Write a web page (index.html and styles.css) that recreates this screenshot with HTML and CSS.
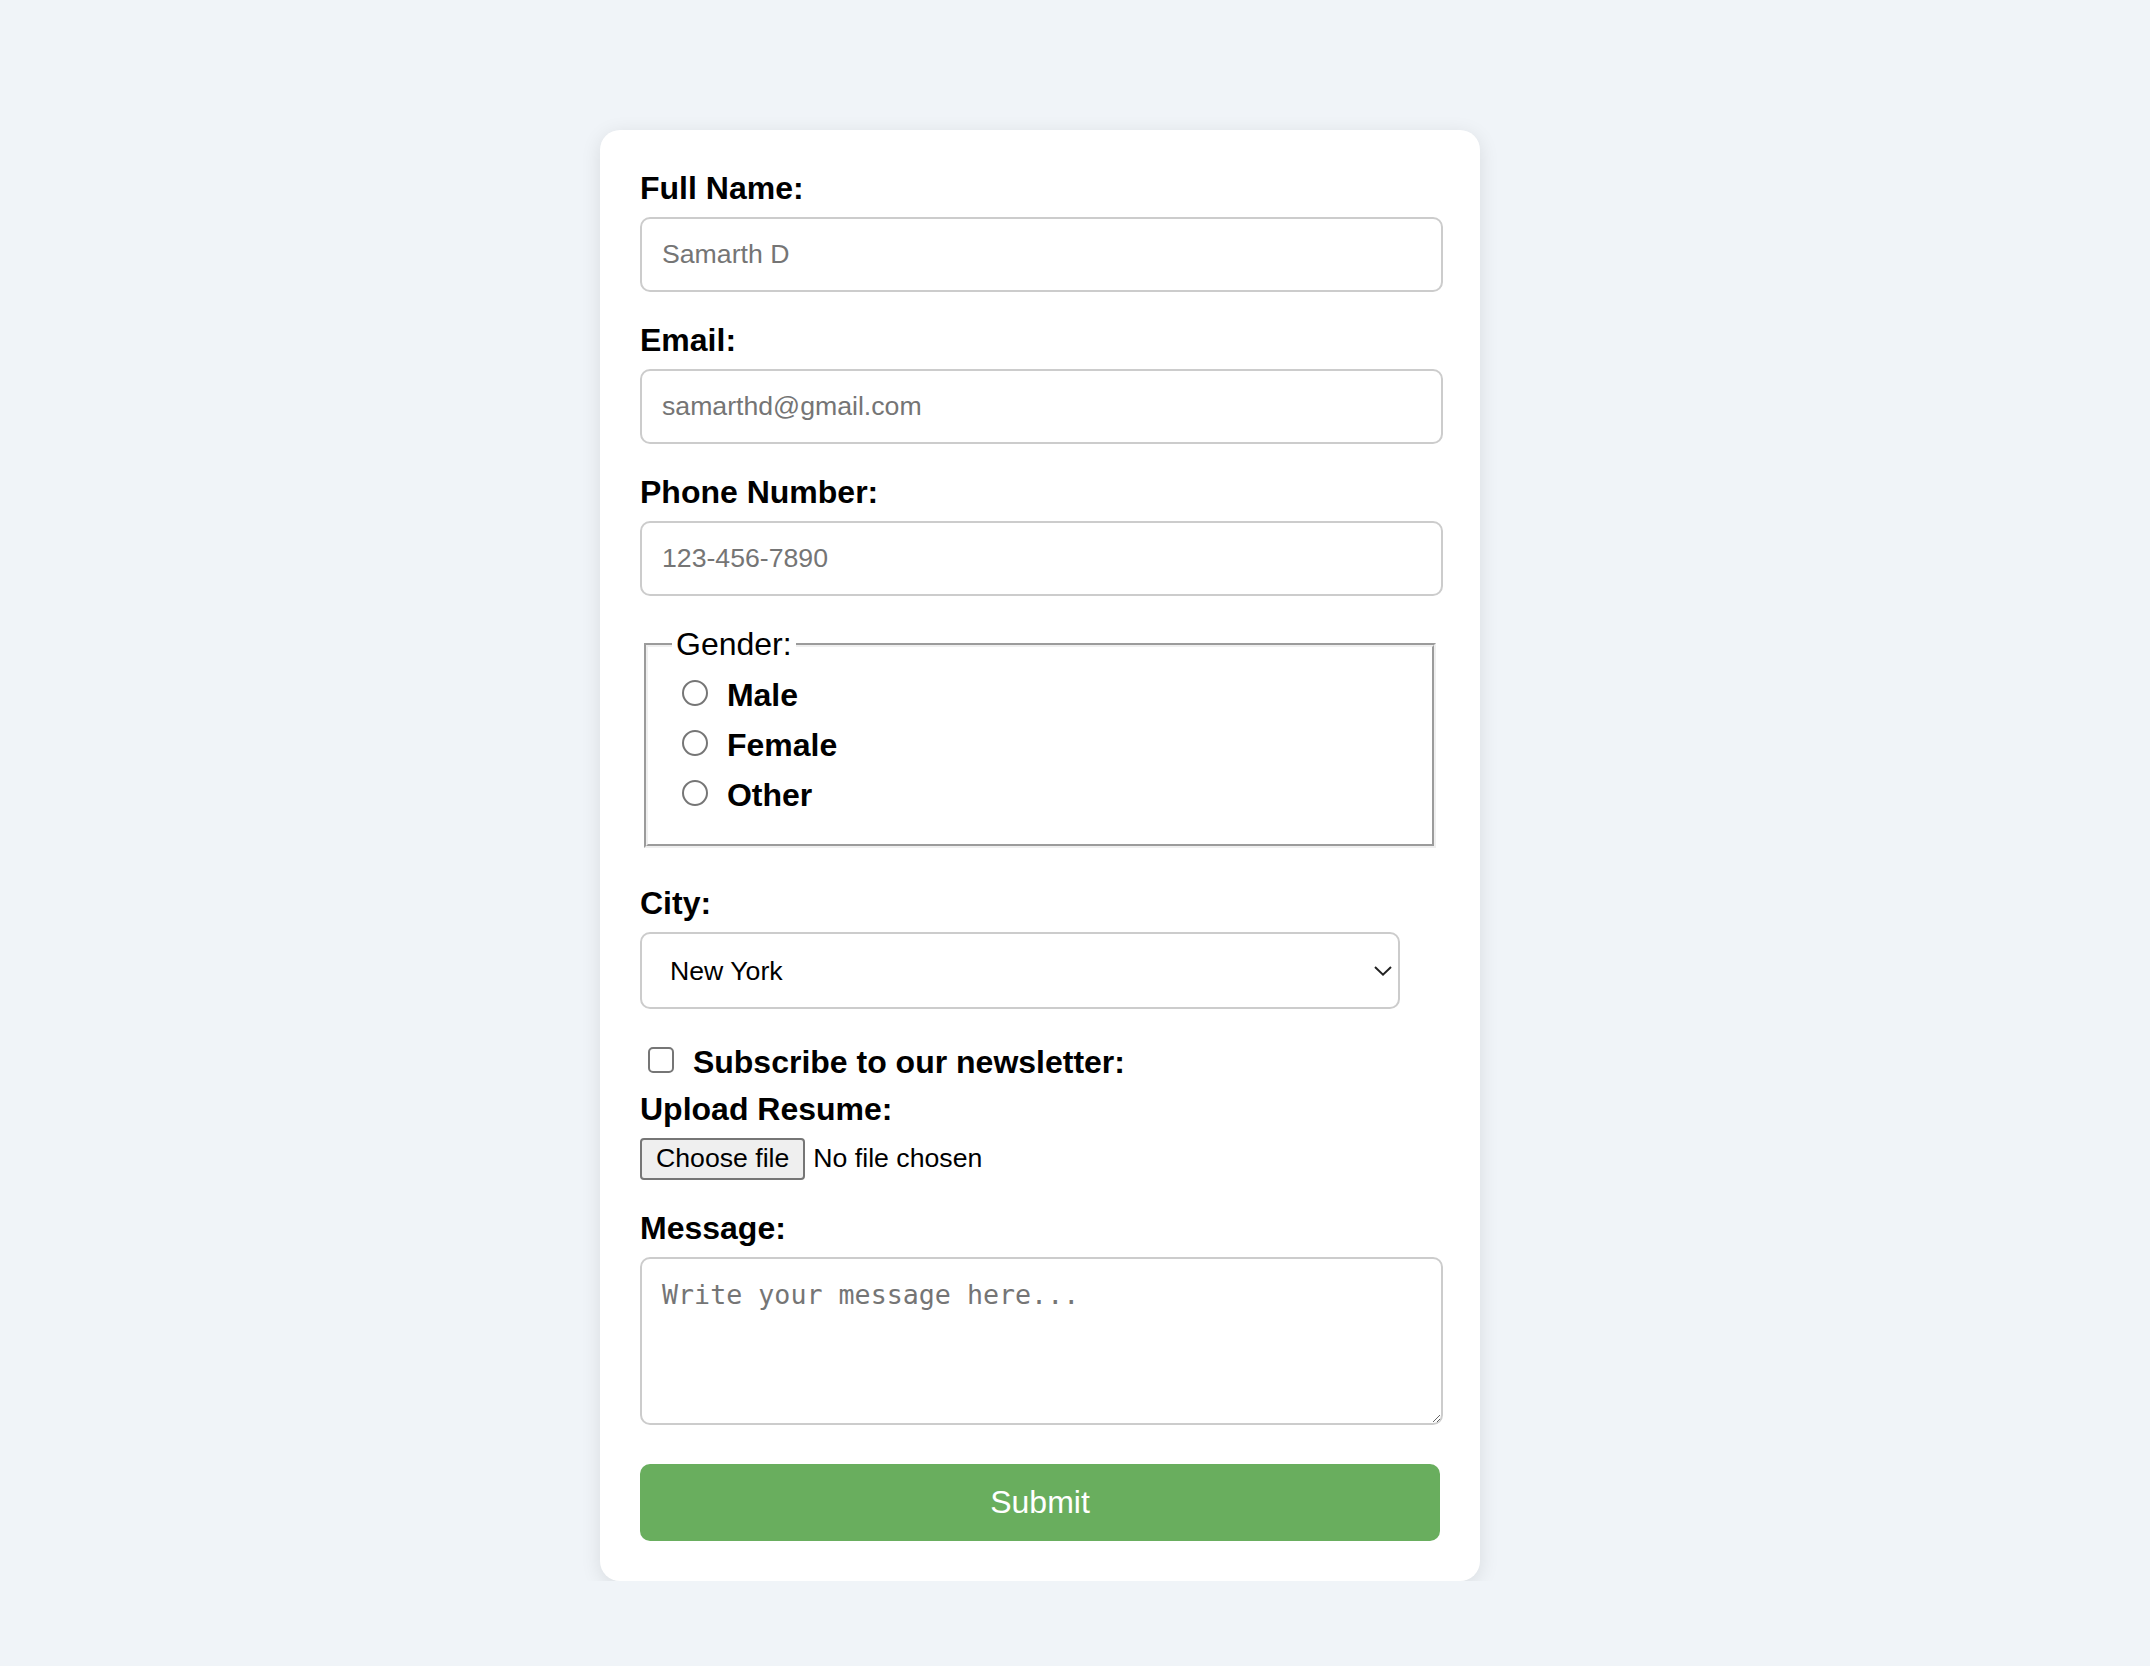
FILE: index.html
```html
<!DOCTYPE html>
<html lang="en">
<head>
<meta charset="utf-8">
<title>Form</title>
<link rel="stylesheet" href="styles.css">
</head>
<body>
<div class="card">
  <form class="form">
    <label class="field-label" for="name">Full Name:</label>
    <input class="text-input" id="name" type="text" placeholder="Samarth D">

    <label class="field-label" for="email">Email:</label>
    <input class="text-input" id="email" type="email" placeholder="samarthd@gmail.com">

    <label class="field-label" for="phone">Phone Number:</label>
    <input class="text-input" id="phone" type="tel" placeholder="123-456-7890">

    <fieldset class="gender">
      <legend>Gender:</legend>
      <label class="radio-label"><input type="radio" name="gender" value="male"> Male</label>
      <label class="radio-label"><input type="radio" name="gender" value="female"> Female</label>
      <label class="radio-label"><input type="radio" name="gender" value="other"> Other</label>
    </fieldset>

    <label class="field-label" for="city">City:</label>
    <div class="select-wrap">
      <select id="city" class="city-select">
        <option>New York</option>
        <option>Los Angeles</option>
        <option>Chicago</option>
      </select>
      <svg class="chevron" width="9" height="5" viewBox="0 0 9 5"><polyline points="0.5,0.5 4.5,4.3 8.5,0.5" fill="none" stroke="#222" stroke-width="1"/></svg>
    </div>

    <div class="check-row">
      <input type="checkbox" id="sub" class="check">
      <label for="sub" class="check-label">Subscribe to our newsletter:</label>
    </div>

    <label class="field-label" for="resume">Upload Resume:</label>
    <div class="file-row" id="resume">
      <button type="button" class="file-btn">Choose file</button>
      <span class="file-status">No file chosen</span>
    </div>

    <label class="field-label" for="msg">Message:</label>
    <textarea id="msg" class="message" placeholder="Write your message here..."></textarea>

    <button type="submit" class="submit">Submit</button>
  </form>
</div>
</body>
</html>
```

FILE: styles.css
```css
html {
  zoom: 2;
}

body {
  margin: 0;
  background: #f0f4f8;
  font-family: "Liberation Sans", Arial, sans-serif;
  font-size: 16px;
  color: #000;
}

.card {
  width: 400px;
  padding: 20px;
  margin: 65px 0 0 300px;
  background: #fff;
  border-radius: 10px;
  box-shadow: 0 2px 10px rgba(0, 0, 0, 0.1);
}

.form {
  margin: 0;
}

.field-label {
  display: block;
  font-weight: bold;
  margin-bottom: 5px;
}

.text-input {
  display: block;
  box-sizing: border-box;
  width: calc(100% + 1.5px);
  height: 37.5px;
  margin: 0 0 15px;
  padding: 10px;
  border: 1px solid #ccc;
  border-radius: 5px;
  font: 13.333px "Liberation Sans", Arial, sans-serif;
  color: #000;
  background: #fff;
  outline: none;
}

.text-input::placeholder,
.message::placeholder {
  color: #757575;
}

.gender {
  margin: 0 2px 18.5px;
  padding: 0.35em 0.75em 0.625em;
  border: 2px groove #efefef;
}

.gender legend {
  padding: 0 2px;
}

.radio-label {
  display: block;
  font-weight: bold;
  margin-bottom: 5px;
}

.radio-label input {
  margin: 3px 5px 0 5px;
}

.select-wrap {
  position: relative;
  width: 95%;
  margin-bottom: 16px;
}

.city-select {
  display: block;
  box-sizing: border-box;
  width: 100%;
  height: 38.6px;
  padding: 10px 10px 10px 14px;
  border: 1px solid #ccc;
  border-radius: 5px;
  background: #fff;
  font: 13.333px "Liberation Sans", Arial, sans-serif;
  color: #000;
  appearance: none;
  -webkit-appearance: none;
  outline: none;
}

.chevron {
  position: absolute;
  right: 4px;
  top: 17px;
  pointer-events: none;
}

.check-row {
  margin-bottom: 4.8px;
}

.check {
  margin: 3px 3px 3px 4px;
}

.check-label {
  font-weight: bold;
  margin-left: 2px;
}

.file-row {
  display: flex;
  align-items: center;
  margin-bottom: 15px;
  font: 13.333px "Liberation Sans", Arial, sans-serif;
}

.file-btn {
  box-sizing: border-box;
  height: 21px;
  margin: 0 4px 0 0;
  padding: 1px 7px;
  border: 1px solid #767676;
  border-radius: 2px;
  background: #efefef;
  color: #000;
  font: 13.333px "Liberation Sans", Arial, sans-serif;
}

.file-status {
  color: #000;
}

.message {
  display: block;
  box-sizing: border-box;
  width: calc(100% + 1.5px);
  height: 84px;
  margin: 0 0 19.5px;
  padding: 10px;
  border: 1px solid #ccc;
  border-radius: 5px;
  font: 13.333px "DejaVu Sans Mono", monospace;
  color: #000;
  background: #fff;
  outline: none;
}

.submit {
  display: block;
  width: 100%;
  padding: 10px;
  border: none;
  border-radius: 5px;
  background: #69ae5e;
  color: #fff;
  font: 16px "Liberation Sans", Arial, sans-serif;
  line-height: normal;
}
```
